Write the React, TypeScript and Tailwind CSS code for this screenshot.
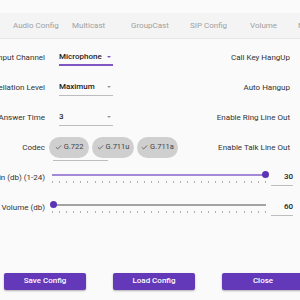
import { Check } from "lucide-react";

const tabs = [
  { name: "Audio Config", w: "w-[59px]" },
  { name: "Multicast", w: "w-[59px]" },
  { name: "GroupCast", w: "w-[59px]" },
  { name: "SIP Config", w: "w-[60px]" },
  { name: "Volume", w: "w-[48px]" },
  { name: "Network", w: "w-[60px]" },
];

function Label({ children }: { children: string }) {
  return (
    <div className="w-[45px] shrink-0 flex justify-end whitespace-nowrap text-[8px] text-[#333]">
      {children}
    </div>
  );
}

function Select({ value, active }: { value: string; active?: boolean }) {
  return (
    <div
      className={
        "ml-[14px] w-[54px] h-[16px] flex items-center justify-between pr-[2px] " +
        (active ? "border-b-2 border-[#7e57c2]" : "border-b border-[#bdbdbd]")
      }
    >
      <span className="text-[8px] font-medium text-[#222]">{value}</span>
      <span
        className={
          "w-0 h-0 border-l-[2px] border-r-[2px] border-t-[2px] border-l-transparent border-r-transparent " +
          (active ? "border-t-[#7e57c2]" : "border-t-[#999]")
        }
      />
    </div>
  );
}

function Chip({ label, w }: { label: string; w: string }) {
  return (
    <div className={"h-[21px] rounded-full bg-[#cfcfcf] flex items-center justify-center gap-[2px] text-[7.5px] text-[#444] " + w}>
      <Check size={7} strokeWidth={2.5} />
      {label}
    </div>
  );
}

function Slider({ pos, active }: { pos: "start" | "end"; active?: boolean }) {
  const ticks = Array.from({ length: 31 });
  return (
    <div className="ml-[7px] w-[214px] h-[30px] relative">
      <div
        className={
          "absolute left-0 right-0 top-[11px] h-[2px] " + (active ? "bg-[#a48ad6]" : "bg-[#a3a3a3]")
        }
      />
      <div
        className={
          "absolute top-[8.5px] w-[7px] h-[7px] rounded-full bg-[#5b34b5] " +
          (pos === "end" ? "right-[-3px]" : "left-[-2px]")
        }
      />
      <div className="absolute left-0 right-0 top-[18px] flex justify-between">
        {ticks.map((_, i) => (
          <span key={i} className="w-[1px] h-[2px] bg-[#b0b0b0]" />
        ))}
      </div>
    </div>
  );
}

function SliderRow({ label, value, pos, active }: { label: string; value: string; pos: "start" | "end"; active?: boolean }) {
  return (
    <div className="h-[30px] flex items-center">
      <Label>{label}</Label>
      <Slider pos={pos} active={active} />
      <div className="ml-[5px] w-[22px] h-[16px] border-b border-[#bdbdbd] flex items-center justify-end text-[8px] font-medium text-[#222]">
        {value}
      </div>
    </div>
  );
}

export default function App() {
  return (
    <div className="w-[300px] h-[300px] overflow-hidden bg-[#fafafa] font-['Roboto',sans-serif]">
      <div className="h-[13px]" />
      <div className="h-[26px] bg-[#f4f4f4] border-b border-[#e6e6e6] flex items-center pl-[13px] whitespace-nowrap">
        {tabs.map((t) => (
          <div key={t.name} className={"shrink-0 text-[8px] text-[#a0a0a0] " + t.w}>
            {t.name}
          </div>
        ))}
      </div>

      <div className="flex pt-[3.5px]">
        <div className="w-[190px] shrink-0">
          <div className="h-[30px] flex items-center">
            <Label>Input Channel</Label>
            <Select value="Microphone" active />
          </div>
          <div className="h-[30px] flex items-center">
            <Label>Cancellation Level</Label>
            <Select value="Maximum" />
          </div>
          <div className="h-[30px] flex items-center">
            <Label>Answer Time</Label>
            <Select value="3" />
          </div>
          <div className="h-[30px] flex items-center">
            <Label>Codec</Label>
            <div className="ml-[8px] w-[55px] h-[24px] border-b border-[#bdbdbd] mt-[2px]">
              <div className="-ml-[4px] flex gap-[3px] whitespace-nowrap">
                <Chip label="G.722" w="w-[40px] shrink-0" />
                <Chip label="G.711u" w="w-[42px] shrink-0" />
                <Chip label="G.711a" w="w-[41px] shrink-0" />
              </div>
            </div>
          </div>
        </div>
        <div className="flex-1 flex flex-col items-end pr-[10px] text-[8px] text-[#333]">
          <div className="h-[30px] flex items-center">Call Key HangUp</div>
          <div className="h-[30px] flex items-center">Auto Hangup</div>
          <div className="h-[30px] flex items-center">Enable Ring Line Out</div>
          <div className="h-[30px] flex items-center">Enable Talk Line Out</div>
        </div>
      </div>

      <SliderRow label="Gain (db) (1-24)" value="30" pos="end" active />
      <SliderRow label="Volume (db)" value="60" pos="start" />

      <div className="mt-[50px] flex gap-[27px] pl-[4px] whitespace-nowrap">
        {["Save Config", "Load Config", "Close"].map((b) => (
          <button
            key={b}
            className="w-[82px] h-[17px] shrink-0 rounded-[2px] bg-[#6338b9] text-white text-[8px] font-medium shadow-[0_1px_2px_rgba(0,0,0,0.3)]"
          >
            {b}
          </button>
        ))}
      </div>
    </div>
  );
}
